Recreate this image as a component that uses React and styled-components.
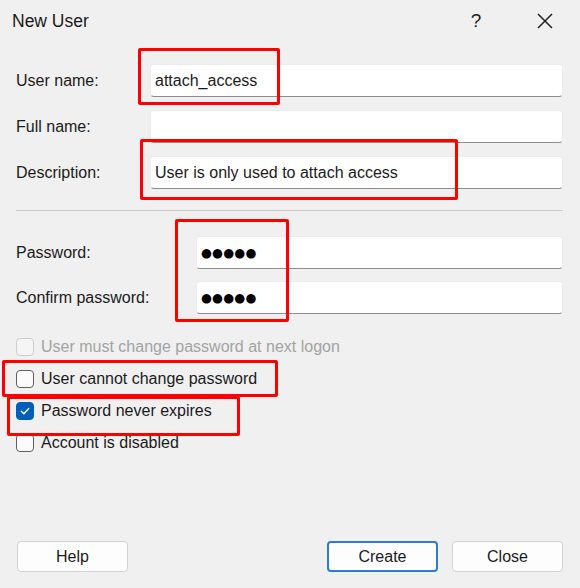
import React from "react";
import styled, { createGlobalStyle } from "styled-components";

const Global = createGlobalStyle`
  html, body { margin: 0; padding: 0; background: #f0f0f0; }
  * { box-sizing: border-box; }
`;

const Dialog = styled.div`
  position: relative;
  width: 580px;
  height: 588px;
  background: #f0f0f0;
  font-family: "Liberation Sans", Arial, sans-serif;
  font-size: 16px;
  color: #1b1b1b;
  display: flex;
  flex-direction: column;
  overflow: hidden;
`;

const TitleBar = styled.div`
  height: 42px;
  display: flex;
  align-items: center;
  padding-left: 12px;
`;

const Title = styled.div`
  font-size: 17.5px;
  flex: 1;
`;

const TitleButton = styled.div`
  width: ${(p) => p.w}px;
  height: 42px;
  display: flex;
  align-items: center;
  justify-content: center;
  font-size: 19px;
  color: #222;
`;

const Form = styled.div`
  padding: 22px 17px 0 16px;
  display: flex;
  flex-direction: column;
`;

const FieldGroup = styled.div`
  display: flex;
  flex-direction: column;
  gap: ${(p) => p.gap}px;
`;

const FieldRow = styled.div`
  display: flex;
  align-items: center;
  height: 33px;
`;

const Label = styled.div`
  width: ${(p) => p.w}px;
  flex: none;
`;

const Input = styled.div`
  flex: 1;
  height: 33px;
  background: #ffffff;
  border: 1px solid #ececec;
  border-bottom: 1px solid #8d8d8d;
  border-radius: 4px;
  display: flex;
  align-items: center;
  padding-left: ${(p) => p.pad || 4}px;
  white-space: nowrap;
`;

const Dots = styled.span`
  font-family: "DejaVu Sans", sans-serif;
  font-size: 12.5px;
  letter-spacing: 0.2px;
  color: #000;
`;

const Separator = styled.div`
  height: 1px;
  background: #c9c9c9;
  margin: 21px 0 25px;
`;

const Checks = styled.div`
  margin-top: 17px;
  display: flex;
  flex-direction: column;
`;

const CheckRow = styled.div`
  height: 32px;
  display: flex;
  align-items: center;
  gap: 7px;
  color: ${(p) => (p.disabled ? "#a3a3a3" : "#1b1b1b")};
`;

const Box = styled.div`
  width: 18px;
  height: 18px;
  border-radius: 4px;
  border: 1px solid ${(p) => (p.checked ? "#005fb8" : p.disabled ? "#cdcdcd" : "#5e5e5e")};
  background: ${(p) => (p.checked ? "#005fb8" : p.disabled ? "#f5f5f5" : "#fbfbfb")};
  display: flex;
  align-items: center;
  justify-content: center;
  flex: none;
`;

const Buttons = styled.div`
  margin-top: auto;
  padding: 0 17px 16px 17px;
  display: flex;
  gap: 14px;
`;

const Button = styled.div`
  width: 111px;
  height: 31px;
  border-radius: 4px;
  background: #fdfdfd;
  border: ${(p) => (p.primary ? "2px solid #2b7cd3" : "1px solid #d2d2d2")};
  display: flex;
  align-items: center;
  justify-content: center;
  margin-left: ${(p) => (p.push ? "auto" : "0")};
`;

const Mark = styled.div`
  position: absolute;
  left: ${(p) => p.x}px;
  top: ${(p) => p.y}px;
  width: ${(p) => p.w}px;
  height: ${(p) => p.h}px;
  border: 3.5px solid #ff0000;
  border-radius: 2px;
  pointer-events: none;
`;

function Check({ checked, disabled, children }) {
  return (
    <CheckRow disabled={disabled}>
      <Box checked={checked} disabled={disabled}>
        {checked && (
          <svg width="12" height="12" viewBox="0 0 12 12">
            <path d="M2.3 6.3 L4.9 8.8 L9.8 3.4" fill="none" stroke="#fff" strokeWidth="1.4" strokeLinecap="round" strokeLinejoin="round" />
          </svg>
        )}
      </Box>
      {children}
    </CheckRow>
  );
}

export default function App() {
  return (
    <>
      <Global />
      <Dialog>
        <TitleBar>
          <Title>New User</Title>
          <TitleButton w={68}>?</TitleButton>
          <TitleButton w={70}>
            <svg width="18" height="18" viewBox="0 0 18 18">
              <path d="M2 2 L16 16 M16 2 L2 16" stroke="#222" strokeWidth="1.5" fill="none" />
            </svg>
          </TitleButton>
        </TitleBar>
        <Form>
          <FieldGroup gap={13}>
            <FieldRow>
              <Label w={134}>User name:</Label>
              <Input>attach_access</Input>
            </FieldRow>
            <FieldRow>
              <Label w={134}>Full name:</Label>
              <Input />
            </FieldRow>
            <FieldRow>
              <Label w={134}>Description:</Label>
              <Input>User is only used to attach access</Input>
            </FieldRow>
          </FieldGroup>
          <Separator />
          <FieldGroup gap={12}>
            <FieldRow>
              <Label w={180}>Password:</Label>
              <Input pad={4}><Dots>●●●●●</Dots></Input>
            </FieldRow>
            <FieldRow>
              <Label w={180}>Confirm password:</Label>
              <Input pad={4}><Dots>●●●●●</Dots></Input>
            </FieldRow>
          </FieldGroup>
          <Checks>
            <Check disabled>User must change password at next logon</Check>
            <Check>User cannot change password</Check>
            <Check checked>Password never expires</Check>
            <Check>Account is disabled</Check>
          </Checks>
        </Form>
        <Buttons>
          <Button>Help</Button>
          <Button primary push>Create</Button>
          <Button>Close</Button>
        </Buttons>
        <Mark x={138} y={48} w={142} h={57} />
        <Mark x={140} y={139} w={318} h={61} />
        <Mark x={175} y={219} w={114} h={103} />
        <Mark x={2} y={360} w={276} h={37} />
        <Mark x={7} y={396} w={233} h={40} />
      </Dialog>
    </>
  );
}
